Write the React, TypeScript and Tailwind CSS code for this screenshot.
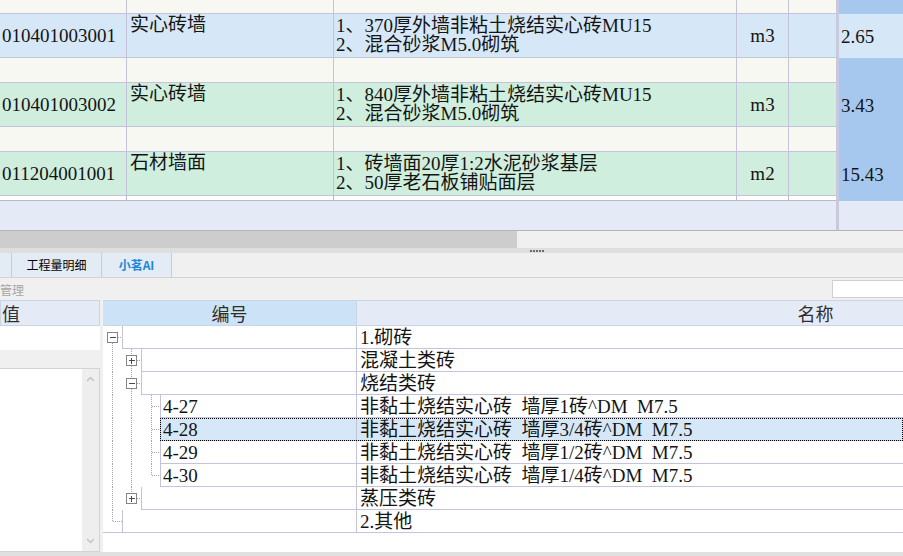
import React from "react";

const SERIF = "font-['Liberation_Serif','Noto_Sans_CJK_SC',serif]";
const SANS = "font-['Noto_Sans_CJK_SC','Noto_Sans',sans-serif]";

interface TopRowProps {
  h: string;
  bg: string;
  qtyBg: string;
  code?: string;
  name?: string;
  desc?: string[];
  unit?: string;
  qty?: string;
  line?: string;
}

function TopRow({ h, bg, qtyBg, code, name, desc, unit, qty, line = "border-[#c5c3d9]" }: TopRowProps) {
  return (
    <div className={`flex shrink-0 ${h}`}>
      <div className={`w-[127px] shrink-0 border-r border-b ${line} ${bg} flex items-center pl-[2px] overflow-hidden`}>
        {code}
      </div>
      <div className={`w-[207px] shrink-0 border-r border-b ${line} ${bg} pl-[3px] pt-[1px] overflow-hidden`}>
        {name}
      </div>
      <div className={`w-[403px] shrink-0 border-r border-b ${line} ${bg} pl-[2px] pt-[2px] overflow-hidden`}>
        {desc?.map((d, i) => (
          <div key={i} className="whitespace-nowrap">
            {d}
          </div>
        ))}
      </div>
      <div className={`w-[52px] shrink-0 border-r border-b ${line} ${bg} flex items-center justify-center`}>
        {unit}
      </div>
      <div className={`w-[47px] shrink-0 border-b ${line} ${bg}`} />
      <div className="w-[3px] shrink-0 bg-[#c9c9dd]" />
      <div className={`flex-1 flex items-center pl-[2px] ${qtyBg}`}>{qty}</div>
    </div>
  );
}

const DOT = "#a4a4a4";

function V({ x, y1, y2 }: { x: number; y1: number; y2: number }) {
  return <line x1={x} x2={x} y1={y1} y2={y2} stroke={DOT} strokeWidth={1} strokeDasharray="1 1" shapeRendering="crispEdges" />;
}
function H({ x1, x2 }: { x1: number; x2: number }) {
  return <line x1={x1} x2={x2} y1={11.5} y2={11.5} stroke={DOT} strokeWidth={1} strokeDasharray="1 1" shapeRendering="crispEdges" />;
}
function Box({ x, plus }: { x: number; plus?: boolean }) {
  const c = x + 5.5;
  return (
    <g shapeRendering="crispEdges">
      <rect x={x + 0.5} y={6.5} width={10} height={10} fill="#ffffff" stroke="#858585" strokeWidth={1} />
      <line x1={x + 3} x2={x + 9} y1={11.5} y2={11.5} stroke="#4a4a4a" strokeWidth={1} />
      {plus && <line x1={c} x2={c} y1={9} y2={15} stroke="#4a4a4a" strokeWidth={1} />}
    </g>
  );
}

interface TreeRowProps {
  level: 0 | 1 | 2;
  code?: string;
  name?: string;
  gutter: React.ReactNode;
  selected?: boolean;
  last?: boolean;
}

function TreeRow({ level, code, name, gutter, selected, last }: TreeRowProps) {
  const gw = level === 0 ? "w-[19px]" : level === 1 ? "w-[38px]" : "w-[57px]";
  const gwNum = level === 0 ? 19 : level === 1 ? 38 : 57;
  const cw = level === 0 ? "w-[234px]" : level === 1 ? "w-[215px]" : "w-[196px]";
  const bb = last ? "" : "border-b";
  return (
    <div className={`flex h-[23px] shrink-0 ${last ? "border-b border-[#c5c3d9]" : ""}`}>
      <svg className={`${gw} h-[23px] shrink-0`} width={gwNum} height={23} viewBox={`0 0 ${gwNum} 23`}>
        {gutter}
      </svg>
      <div
        className={`flex flex-1 ${
          selected ? "bg-[#d6e8f8] outline-1 outline-dotted outline-black -outline-offset-1" : "bg-white"
        }`}
      >
        <div className={`${cw} shrink-0 border-l ${bb} border-[#c5c3d9] pl-[2px] pt-[1px] flex items-center whitespace-pre`}>
          {code}
        </div>
        <div className={`flex-1 border-l ${bb} border-[#c5c3d9] pl-[3px] pt-[1px] flex items-center whitespace-pre`}>
          {name}
        </div>
      </div>
    </div>
  );
}

export default function App() {
  return (
    <div className={`w-[903px] h-[556px] overflow-hidden flex flex-col bg-[#f0f0f0] text-[#141414] ${SERIF} text-[19px] leading-[19px]`}>
      {/* top table */}
      <div className="flex flex-col h-[201px] shrink-0">
        <TopRow h="h-[14px]" bg="bg-[#f8f8f3]" qtyBg="bg-[#a7c8ee]" />
        <TopRow
          h="h-[44px]"
          bg="bg-[#d6e8f8]"
          qtyBg="bg-[#d6e8f8]"
          code="010401003001"
          name="实心砖墙"
          desc={["1、370厚外墙非粘土烧结实心砖MU15", "2、混合砂浆M5.0砌筑"]}
          unit="m3"
          qty="2.65"
        />
        <TopRow h="h-[25px]" bg="bg-[#f8f8f3]" qtyBg="bg-[#a7c8ee]" />
        <TopRow
          h="h-[44px]"
          bg="bg-[#cfeedd]"
          qtyBg="bg-[#a7c8ee]"
          code="010401003002"
          name="实心砖墙"
          desc={["1、840厚外墙非粘土烧结实心砖MU15", "2、混合砂浆M5.0砌筑"]}
          unit="m3"
          qty="3.43"
        />
        <TopRow h="h-[25px]" bg="bg-[#f8f8f3]" qtyBg="bg-[#a7c8ee]" />
        <TopRow
          h="h-[44px]"
          bg="bg-[#cfeedd]"
          qtyBg="bg-[#a7c8ee]"
          code="011204001001"
          name="石材墙面"
          desc={["1、砖墙面20厚1:2水泥砂浆基层", "2、50厚老石板铺贴面层"]}
          unit="m2"
          qty="15.43"
        />
        <TopRow h="h-[5px]" bg="bg-white" qtyBg="bg-[#a7c8ee]" line="border-[#b8b8c8]" />
      </div>

      {/* empty area below table */}
      <div className="flex h-[30px] shrink-0 border-b border-[#b4b4b4] bg-[#e4ebf6]">
        <div className="w-[836px] shrink-0" />
        <div className="w-[3px] shrink-0 bg-[#c9c9dd]" />
        <div className="flex-1" />
      </div>

      {/* horizontal scrollbar */}
      <div className="flex h-[17px] shrink-0 bg-[#f0f0f0]">
        <div className="w-[517px] shrink-0 bg-[#cdcdcd]" />
      </div>

      {/* splitter */}
      <div className="h-[5px] shrink-0 bg-[#dedede] flex items-center justify-center">
        <div className="flex gap-[1px] ml-[170px]">
          <div className="w-[2px] h-[2px] bg-[#6a6a6a]" />
          <div className="w-[2px] h-[2px] bg-[#6a6a6a]" />
          <div className="w-[2px] h-[2px] bg-[#6a6a6a]" />
          <div className="w-[2px] h-[2px] bg-[#6a6a6a]" />
          <div className="w-[2px] h-[2px] bg-[#6a6a6a]" />
        </div>
      </div>

      {/* tabs */}
      <div className={`flex h-[25px] shrink-0 border-b border-[#d2d2d2] bg-[#f0f0f0] ${SANS} text-[12px] leading-none`}>
        <div className="w-[12px] shrink-0 bg-[#e3ebf5] border-r border-[#bcd0e4]" />
        <div className="w-[90px] shrink-0 bg-[#e3ebf5] border-r border-[#bcd0e4] flex items-center justify-center text-black">
          工程量明细
        </div>
        <div className="w-[70px] shrink-0 bg-[#e3ebf5] border-r border-[#bcd0e4] flex items-center justify-center text-[#1f88d6] font-bold">
          小茗AI
        </div>
      </div>

      {/* toolbar */}
      <div className={`flex h-[22px] shrink-0 bg-[#f0f0f0] ${SANS}`}>
        <div className="flex-1 min-w-0 text-[12px] leading-none text-[#a6a6a6] pt-[6px]">管理</div>
        <div className="w-[80px] h-[18px] mt-[2px] -mr-[9px] shrink-0 bg-white border border-[#cfcfcf]" />
      </div>

      {/* headers */}
      <div className={`flex h-[26px] shrink-0 ${SANS} text-[18px] leading-none text-[#2e2e2e]`}>
        <div className="w-[100px] shrink-0 bg-[#e4ebf6] border border-[#c9d4e4] flex items-center pl-[1px]">值</div>
        <div className="w-[3px] shrink-0" />
        <div className="flex-1 flex overflow-hidden border-y border-[#c9d4e4]">
          <div className="w-[253px] shrink-0 bg-[#cce3f7] flex items-center justify-center">编号</div>
          <div className="w-[918px] shrink-0 bg-[#e4ebf6] border-l border-[#c9d4e4] flex items-center justify-center">
            名称
          </div>
        </div>
      </div>

      {/* body */}
      <div className="flex flex-1 min-h-0">
        {/* left panel */}
        <div className="w-[100px] shrink-0 flex flex-col">
          <div className="h-[24px] shrink-0 bg-white" />
          <div className="h-[18px] shrink-0 bg-[#f0f0f0]" />
          <div className="flex-1 flex bg-white border border-l-0 border-[#d4d4d4]">
            <div className="flex-1" />
            <div className="w-[17px] shrink-0 bg-[#eeeeee] flex flex-col justify-between items-center py-[7px]">
              <svg width="9" height="6" viewBox="0 0 9 6">
                <path d="M1 5 L4.5 1.5 L8 5" fill="none" stroke="#c2c2c2" strokeWidth="1.4" />
              </svg>
              <svg width="9" height="6" viewBox="0 0 9 6">
                <path d="M1 1 L4.5 4.5 L8 1" fill="none" stroke="#c2c2c2" strokeWidth="1.4" />
              </svg>
            </div>
          </div>
        </div>
        <div className="w-[3px] shrink-0" />

        {/* right panel: tree */}
        <div className="flex-1 min-w-0 flex flex-col bg-white overflow-hidden">
          <TreeRow
            level={0}
            name="1.砌砖"
            gutter={
              <>
                <V x={9.5} y1={17} y2={23} />
                <H x1={15} x2={19} />
                <Box x={4} />
              </>
            }
          />
          <TreeRow
            level={1}
            name="混凝土类砖"
            gutter={
              <>
                <V x={9.5} y1={0} y2={23} />
                <V x={28.5} y1={0} y2={6} />
                <V x={28.5} y1={17} y2={23} />
                <H x1={34} x2={38} />
                <Box x={23} plus />
              </>
            }
          />
          <TreeRow
            level={1}
            name="烧结类砖"
            gutter={
              <>
                <V x={9.5} y1={0} y2={23} />
                <V x={28.5} y1={0} y2={6} />
                <V x={28.5} y1={17} y2={23} />
                <H x1={34} x2={38} />
                <Box x={23} />
              </>
            }
          />
          {[
            ["4-27", "非黏土烧结实心砖\u2002墙厚1砖^DM\u2002M7.5"],
            ["4-28", "非黏土烧结实心砖\u2002墙厚3/4砖^DM\u2002M7.5"],
            ["4-29", "非黏土烧结实心砖\u2002墙厚1/2砖^DM\u2002M7.5"],
            ["4-30", "非黏土烧结实心砖\u2002墙厚1/4砖^DM\u2002M7.5"],
          ].map(([c, n], i) => (
            <TreeRow
              key={c}
              level={2}
              code={c}
              name={n}
              selected={i === 1}
              gutter={
                <>
                  <V x={9.5} y1={0} y2={23} />
                  <V x={28.5} y1={0} y2={23} />
                  <V x={48.5} y1={0} y2={i === 3 ? 12 : 23} />
                  <H x1={49} x2={57} />
                </>
              }
            />
          ))}
          <TreeRow
            level={1}
            name="蒸压类砖"
            gutter={
              <>
                <V x={9.5} y1={0} y2={23} />
                <V x={28.5} y1={0} y2={6} />
                <H x1={34} x2={38} />
                <Box x={23} plus />
              </>
            }
          />
          <TreeRow
            level={0}
            name="2.其他"
            last
            gutter={
              <>
                <V x={9.5} y1={0} y2={12} />
                <H x1={10} x2={19} />
              </>
            }
          />
          <div className="flex-1" />
        </div>
      </div>
      <div className="h-[4px] shrink-0 bg-[#e0e0e0]" />
    </div>
  );
}
